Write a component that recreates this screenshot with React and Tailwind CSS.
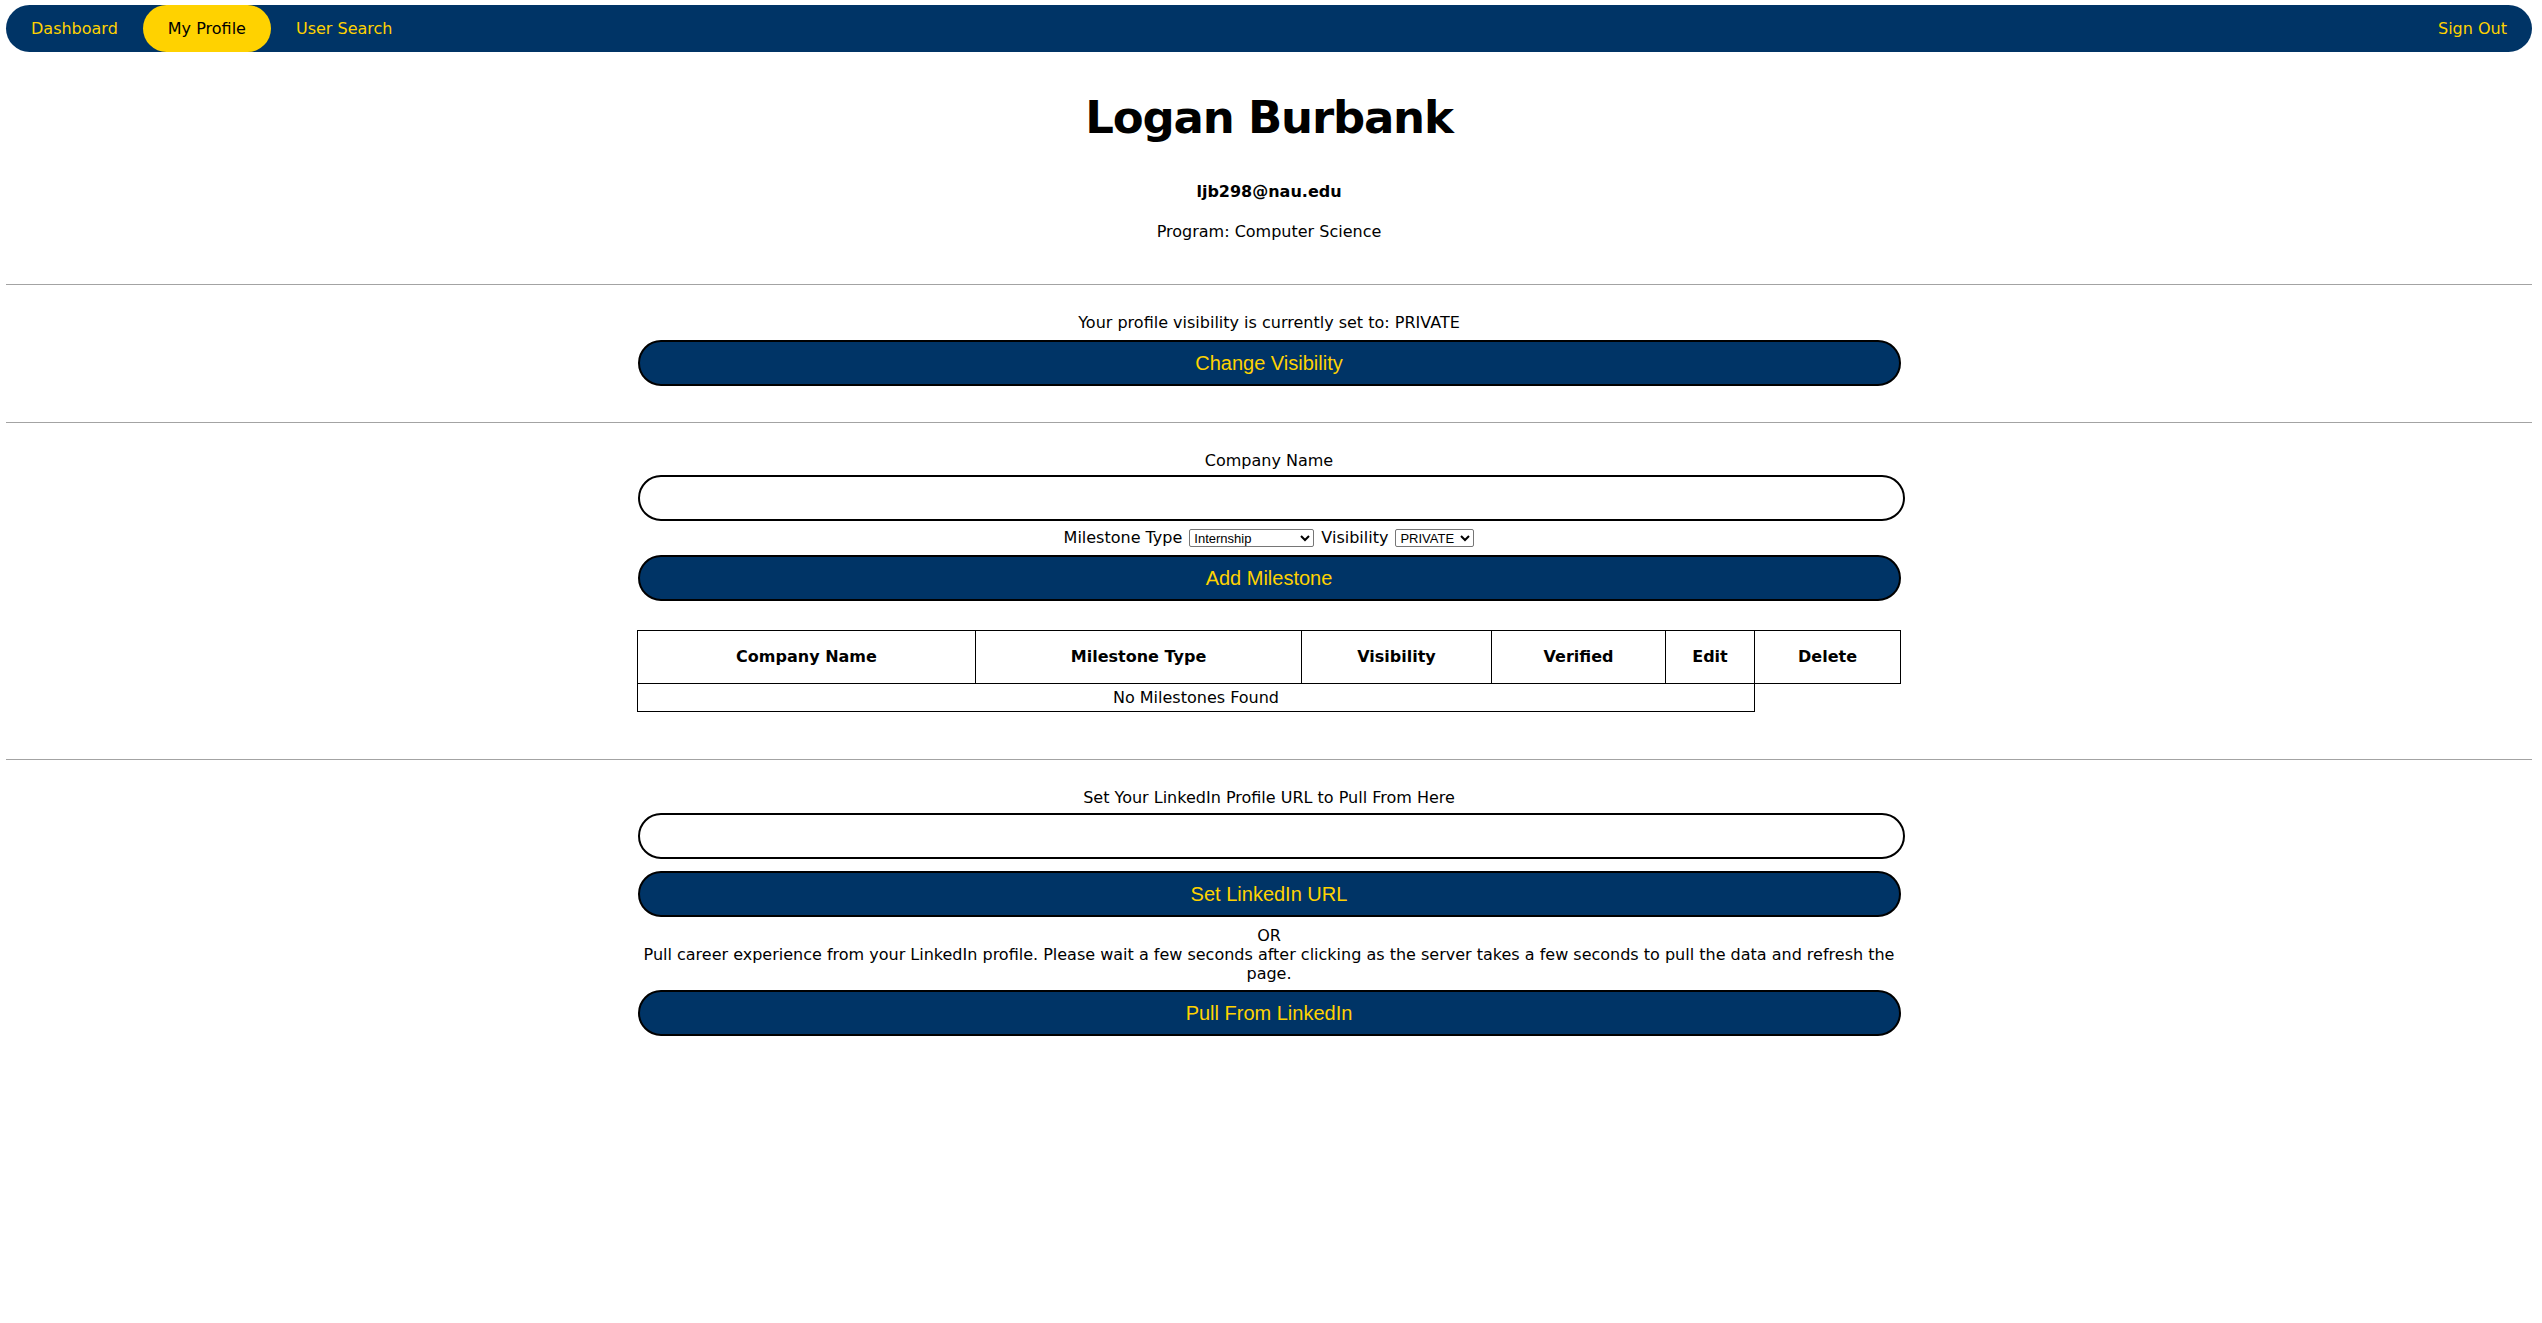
import React, { useState } from "react";

// Nav links shown in the top bar
const navLinks = [
  { label: "Dashboard", active: false },
  { label: "My Profile", active: true },
  { label: "User Search", active: false },
];

const columns = [
  { label: "Company Name", w: "w-[338px]" },
  { label: "Milestone Type", w: "w-[326px]" },
  { label: "Visibility", w: "w-[190px]" },
  { label: "Verified", w: "w-[174px]" },
  { label: "Edit", w: "w-[89px]" },
  { label: "Delete", w: "w-[146px]" },
];

function PillButton({ children, className = "" }) {
  return (
    <button
      className={`block w-1/2 mx-auto h-[46px] rounded-full border-2 border-black bg-[#003466] text-[#ffd200] text-[20px] font-['Liberation_Sans',Arial,sans-serif] cursor-pointer ${className}`}
    >
      {children}
    </button>
  );
}

function PillInput({ value, onChange, className = "" }) {
  return (
    <input
      type="text"
      value={value}
      onChange={onChange}
      className={`block ml-[25%] w-[calc(50%+4px)] h-[46px] rounded-full border-2 border-black bg-white px-5 outline-none ${className}`}
    />
  );
}

export default function App() {
  const [company, setCompany] = useState("");
  const [linkedin, setLinkedin] = useState("");
  const [milestoneType, setMilestoneType] = useState("Internship");
  const [visibility, setVisibility] = useState("PRIVATE");

  return (
    <div className="min-h-screen bg-white pt-[5px] pl-[6px] pr-[10px] text-black text-[16px] font-['DejaVu_Sans',Verdana,sans-serif]">
      {/* top bar */}
      <nav className="flex items-stretch h-[47px] rounded-full bg-[#003466]">
        {navLinks.map((l) => (
          <a
            key={l.label}
            href="#"
            className={`flex items-center px-[25px] rounded-full ${
              l.active ? "bg-[#ffd200] text-black" : "text-[#ffd200]"
            }`}
          >
            {l.label}
          </a>
        ))}
        <a href="#" className="ml-auto flex items-center px-[25px] text-[#ffd200]">
          Sign Out
        </a>
      </nav>

      {/* profile header */}
      <h1 className="mt-[43px] text-center text-[45px] leading-[45px] font-bold tracking-[-1.2px]">
        Logan Burbank
      </h1>
      <p className="mt-[42px] text-center font-bold leading-[20px]">ljb298@nau.edu</p>
      <p className="mt-[20px] text-center leading-[20px]">Program: Computer Science</p>

      <hr className="mt-[42px] border-t border-[#a3a3a3]" />

      {/* visibility */}
      <p className="mt-[28px] text-center leading-[20px]">
        Your profile visibility is currently set to: {visibility}
      </p>
      <PillButton className="mt-[7px]">Change Visibility</PillButton>

      <hr className="mt-[36px] border-t border-[#a3a3a3]" />

      {/* milestones */}
      <p className="mt-[28px] text-center leading-[20px]">Company Name</p>
      <PillInput className="mt-[4px]" value={company} onChange={(e) => setCompany(e.target.value)} />

      <div className="mt-[4px] h-[26px] flex items-center justify-center gap-[7px]">
        <span>Milestone Type</span>
        <select
          value={milestoneType}
          onChange={(e) => setMilestoneType(e.target.value)}
          className="w-[125px] h-[18px] border border-[#767676] rounded-[2px] bg-white text-[13px] font-['Liberation_Sans',Arial,sans-serif] text-black"
        >
          <option>Internship</option>
          <option>Full-Time</option>
          <option>Part-Time</option>
          <option>Co-op</option>
        </select>
        <span>Visibility</span>
        <select
          value={visibility}
          onChange={(e) => setVisibility(e.target.value)}
          className="w-[79px] h-[18px] border border-[#767676] rounded-[2px] bg-white text-[13px] font-['Liberation_Sans',Arial,sans-serif] text-black"
        >
          <option>PRIVATE</option>
          <option>PUBLIC</option>
        </select>
      </div>
      <PillButton className="mt-[4px]">Add Milestone</PillButton>

      <table className="mt-[29px] w-1/2 mx-auto table-fixed border-collapse">
        <thead>
          <tr>
            {columns.map((c) => (
              <th key={c.label} className={`${c.w} h-[53px] border border-black font-bold text-center`}>
                {c.label}
              </th>
            ))}
          </tr>
        </thead>
        <tbody>
          <tr>
            <td colSpan={5} className="h-[28px] border border-black text-center">
              No Milestones Found
            </td>
          </tr>
        </tbody>
      </table>

      <hr className="mt-[47px] border-t border-[#a3a3a3]" />

      {/* linkedin */}
      <p className="mt-[28px] text-center leading-[20px]">Set Your LinkedIn Profile URL to Pull From Here</p>
      <PillInput className="mt-[5px]" value={linkedin} onChange={(e) => setLinkedin(e.target.value)} />
      <PillButton className="mt-[12px]">Set LinkedIn URL</PillButton>
      <p className="mt-[9px] text-center leading-[19px]">OR</p>
      <p className="w-1/2 mx-auto text-center leading-[19px]">
        Pull career experience from your LinkedIn profile. Please wait a few seconds after clicking as the server takes a few seconds to pull the data and refresh the page.
      </p>
      <PillButton className="mt-[7px]">Pull From LinkedIn</PillButton>
    </div>
  );
}
